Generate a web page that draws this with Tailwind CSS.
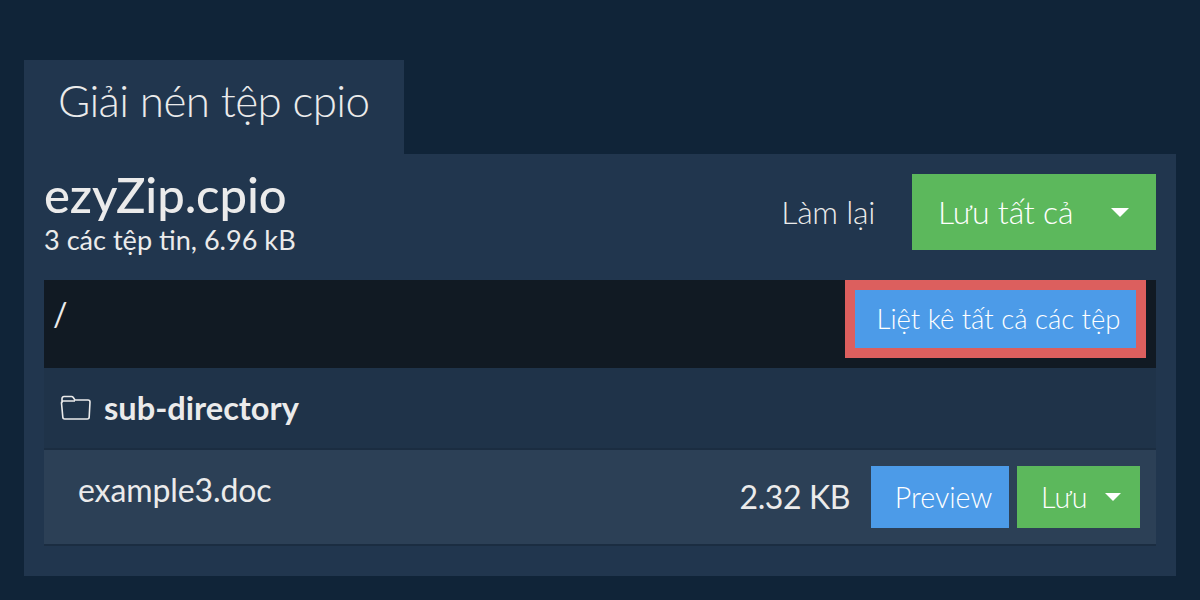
<!DOCTYPE html>
<html lang="vi">
<head>
<meta charset="utf-8">
<script src="https://cdn.jsdelivr.net/npm/@tailwindcss/browser@4"></script>
</head>
<body class="m-0 h-[600px] w-[1200px] overflow-hidden bg-[#102438] font-['Lato',sans-serif] text-[#ebebeb]">
<div class="px-6 pt-[60px]">
  <div class="flex h-[94px] w-[380px] items-start bg-[#21364e] pl-[34px] pt-[13px]">
    <h2 class="text-[44px] leading-[54px] font-light tracking-[-0.6px] text-[#ebebeb]">Giải nén tệp cpio</h2>
  </div>
  <div class="h-[422px] bg-[#21364e] px-5 pt-5">
    <div class="flex h-[106px] items-start justify-between">
      <div>
        <div class="-mt-[3px] text-[49px] leading-[46px] font-medium tracking-[-0.1px]">ezyZip.cpio</div>
        <div class="mt-[8px] text-[27.1px] leading-[30px]">3 các tệp tin, 6.96 kB</div>
      </div>
      <div class="flex items-center">
        <span class="mr-[37px] text-[32px] leading-[40px] font-light tracking-[-0.3px]">Làm lại</span>
        <button class="flex h-[76px] w-[244px] items-center bg-[#5cb85c] pl-[26px] text-[32px] font-light tracking-[-0.2px] text-white">
          <span>Lưu tất cả</span>
          <span class="ml-[38px] h-0 w-0 border-x-[9px] border-t-[9px] border-x-transparent border-t-white"></span>
        </button>
      </div>
    </div>
    <div class="flex h-[88px] items-start justify-between bg-[#111a23] pr-[10px]">
      <span class="pl-[9px] pt-[14px] text-[32px] leading-[40px]">/</span>
      <div class="border-[10px] border-[#dc5f5e]">
        <button class="flex h-[58px] w-[281px] items-center justify-center bg-[#4c9be8] pl-[6px] text-[27.5px] font-light text-white">Liệt kê tất cả các tệp</button>
      </div>
    </div>
    <div class="flex h-[82px] items-center border-b-2 border-[#1b2d41] bg-[#1f3349] pl-[16px]">
      <svg class="h-[32px] w-[32px]" viewBox="0 0 32 32" fill="none" stroke="#ebebeb" stroke-width="1.6" stroke-linejoin="round"><path d="M2 11 V6.5 a2 2 0 0 1 2-2 h7.5 a2 2 0 0 1 1.6.8 L15 8 H28 a2 2 0 0 1 2 2 L29.2 25 a2 2 0 0 1-2 2 H4.8 a2 2 0 0 1-2-2 L1.5 11 a1.8 1.8 0 0 1 1.8-2 H15"/></svg>
      <span class="ml-[12px] text-[32.6px] leading-[40px] font-bold">sub-directory</span>
    </div>
    <div class="flex h-[96px] items-start justify-between border-b-2 border-[#1b2d41] bg-[#2c4056] pl-[34px] pr-4">
      <span class="pt-[20px] text-[32px] leading-[40px] tracking-[-0.1px]">example3.doc</span>
      <div class="flex items-center pt-4">
        <span class="mr-[21px] text-[32px] leading-[62px] tracking-[-0.4px]">2.32 KB</span>
        <button class="flex h-[62px] w-[138px] items-center justify-center bg-[#4c9be8] pl-[7px] text-[28.6px] font-light text-white">Preview</button>
        <button class="ml-2 flex h-[62px] w-[123px] items-center bg-[#5cb85c] pl-[24px] text-[28.6px] font-light text-white">
          <span>Lưu</span>
          <span class="ml-[18px] h-0 w-0 border-x-[8px] border-t-[8px] border-x-transparent border-t-white"></span>
        </button>
      </div>
    </div>
  </div>
</div>
</body>
</html>
